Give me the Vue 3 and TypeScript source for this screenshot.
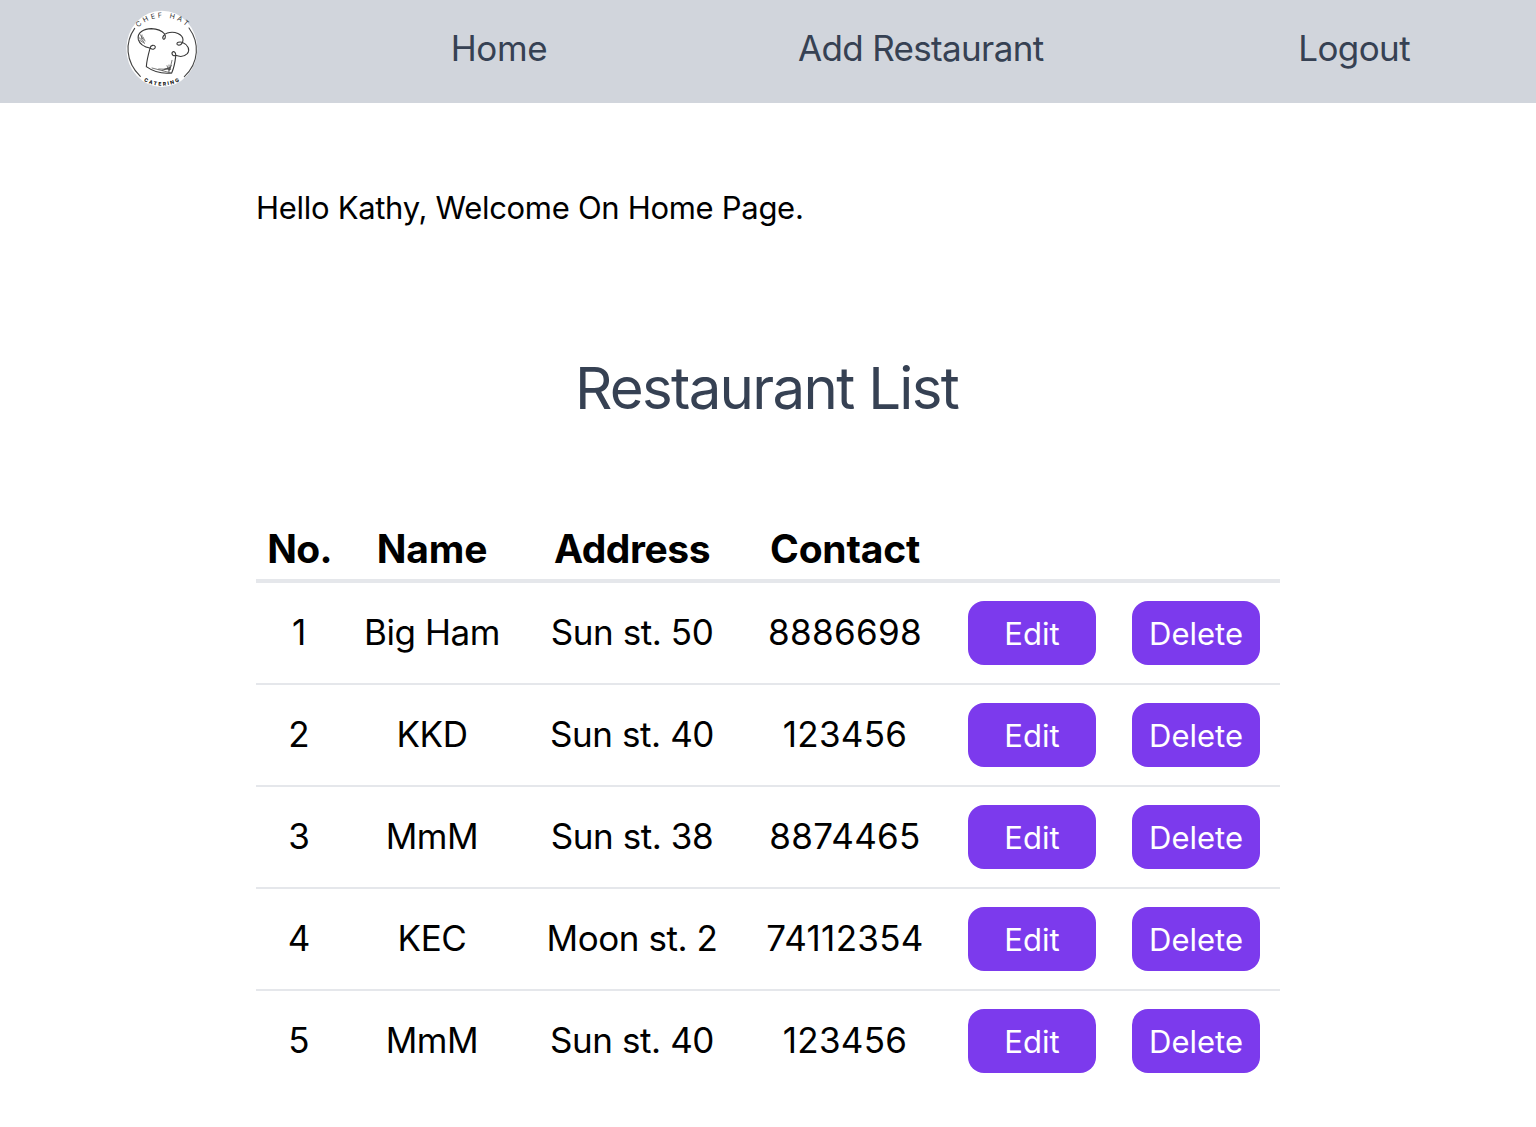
<script setup lang="ts">
interface Restaurant {
  no: number
  name: string
  address: string
  contact: string
}

const user = 'Kathy'

const restaurants: Restaurant[] = [
  { no: 1, name: 'Big Ham', address: 'Sun st. 50', contact: '8886698' },
  { no: 2, name: 'KKD', address: 'Sun st. 40', contact: '123456' },
  { no: 3, name: 'MmM', address: 'Sun st. 38', contact: '8874465' },
  { no: 4, name: 'KEC', address: 'Moon st. 2', contact: '74112354' },
  { no: 5, name: 'MmM', address: 'Sun st. 40', contact: '123456' },
]
</script>

<template>
  <nav class="nav">
    <svg class="logo" viewBox="42 30 216 234" aria-label="Chef Hat Catering">
      <defs>
        <path id="arc-top" d="M80 83 C110 45 190 40 227 83" />
        <path id="arc-bottom" d="M95 243 Q150 272 208 241" />
      </defs>
      <ellipse cx="149.500" cy="146.500" rx="106.500" ry="114.500" fill="#fff" />
      <g fill="none" stroke="#383838" stroke-width="3.300" stroke-linecap="round" stroke-linejoin="round">
        <path d="M68 85 C39 126 39 184 85 229" stroke="#444" />
        <path d="M231 84 C263 128 262 187 217 230" stroke="#444" />
        <path
          d="M103 200 C104 182 109 163 114 145 C116 134 127 134 130 140 C131 147 122 150 116 145 C101 142 84 137 79 119 C74 98 96 86 118 86 C137 87 151 94 158 102 C163 111 158 120 154 117 C149 113 156 102 166 99 C188 92 213 103 213 120 C213 133 202 138 196 134 C191 128 203 123 213 128 C228 134 235 149 226 161 C216 171 201 170 191 166 C181 171 177 158 183 155 C190 154 192 162 191 170 C189 187 186 204 179 219 C153 222 124 215 103 200"
        />
        <path d="M120 204 L178 219 M140 207 L176 208 M151 211 L174 203 L158 207 M165 197 L171 213 M171 195 L172 208 M180 181 L174 207 M178 196 L170 216" stroke-width="2" />
        <path d="M85 104 L94 120 M90 105 L89 116 M80 112 L96 126 M83 121 L98 130 M93 111 L99 123" stroke-width="2" />
      </g>
      <text class="logo-top">
        <textPath href="#arc-top" textLength="158">CHEF HAT</textPath>
      </text>
      <text class="logo-bottom">
        <textPath href="#arc-bottom" textLength="112">CATERING</textPath>
      </text>
    </svg>
    <a class="link home">Home</a>
    <a class="link add">Add Restaurant</a>
    <a class="link logout">Logout</a>
  </nav>

  <main class="content">
    <p class="greeting">Hello {{ user }}, Welcome On Home Page.</p>
    <h1 class="title">Restaurant List</h1>

    <div class="table">
      <div class="row head">
        <span class="th no">No.</span>
        <span class="th">Name</span>
        <span class="th address">Address</span>
        <span class="th">Contact</span>
      </div>
      <div v-for="r in restaurants" :key="r.no" class="row">
        <span class="td">{{ r.no }}</span>
        <span class="td name">{{ r.name }}</span>
        <span class="td address">{{ r.address }}</span>
        <span class="td contact">{{ r.contact }}</span>
        <button class="btn" type="button">Edit</button>
        <button class="btn" type="button">Delete</button>
      </div>
    </div>
  </main>
</template>

<style>
body {
  margin: 0;
  background: #fff;
}
</style>

<style scoped>
.nav,
.content {
  font-family: Inter, 'Liberation Sans', sans-serif;
  font-weight: 430;
}

.nav {
  display: flex;
  justify-content: space-between;
  box-sizing: border-box;
  height: 103px;
  padding: 0 126px;
  background: #d1d5dc;
  color: #364153;
}

.logo {
  width: 72px;
  height: 78px;
  margin-top: 10px;
}

.logo-top {
  font: 400 21px Inter, sans-serif;
  fill: #333;
}

.logo-bottom {
  font: 800 15px Inter, sans-serif;
  fill: #111;
}

.link {
  font-size: 35px;
  line-height: 97px;
  white-space: nowrap;
}

.link.home {
  margin-right: -1px;
  letter-spacing: -0.4px;
}

.link.add {
  margin: 0 2px 0 -1px;
  letter-spacing: -0.65px;
}

.link.logout {
  letter-spacing: -0.6px;
}

.content {
  width: 1024px;
  margin: 0 auto;
  color: #000;
}

.greeting {
  margin: 0;
  padding-top: 81px;
  font-size: 31px;
  line-height: 48px;
  letter-spacing: -0.3px;
}

.title {
  margin: 120px 0 0;
  padding-right: 3px;
  font-size: 58.2px;
  font-weight: 430;
  line-height: 72px;
  letter-spacing: -1.7px;
  text-align: center;
  color: #364153;
}

.table {
  margin-top: 95px;
}

.row {
  display: grid;
  grid-template-columns: 82px 184px 216px 210px 164px 164px;
  height: 100px;
  padding: 0 2px;
  border-bottom: 2px solid #e5e7eb;
}

.row.head {
  height: 60px;
  border-bottom-width: 4px;
}

.row:last-child {
  border-bottom: 0;
}

.th {
  font-size: 39px;
  font-weight: 700;
  line-height: 59px;
  letter-spacing: -0.2px;
  text-align: center;
}

.th.no {
  padding-left: 1px;
  letter-spacing: -0.8px;
}

.th.address {
  letter-spacing: -0.45px;
}

.td {
  font-size: 35px;
  line-height: 98px;
  text-align: center;
}

.td.name {
  letter-spacing: -0.4px;
}

.td.address {
  letter-spacing: -0.42px;
}

.td.contact {
  letter-spacing: 0.3px;
}

.btn {
  align-self: center;
  justify-self: center;
  box-sizing: border-box;
  width: 128px;
  height: 64px;
  padding: 0;
  border: 0;
  border-radius: 16px;
  background: #7c3aed;
  color: #fff;
  font: 430 31px Inter, 'Liberation Sans', sans-serif;
  letter-spacing: 0;
}
</style>
